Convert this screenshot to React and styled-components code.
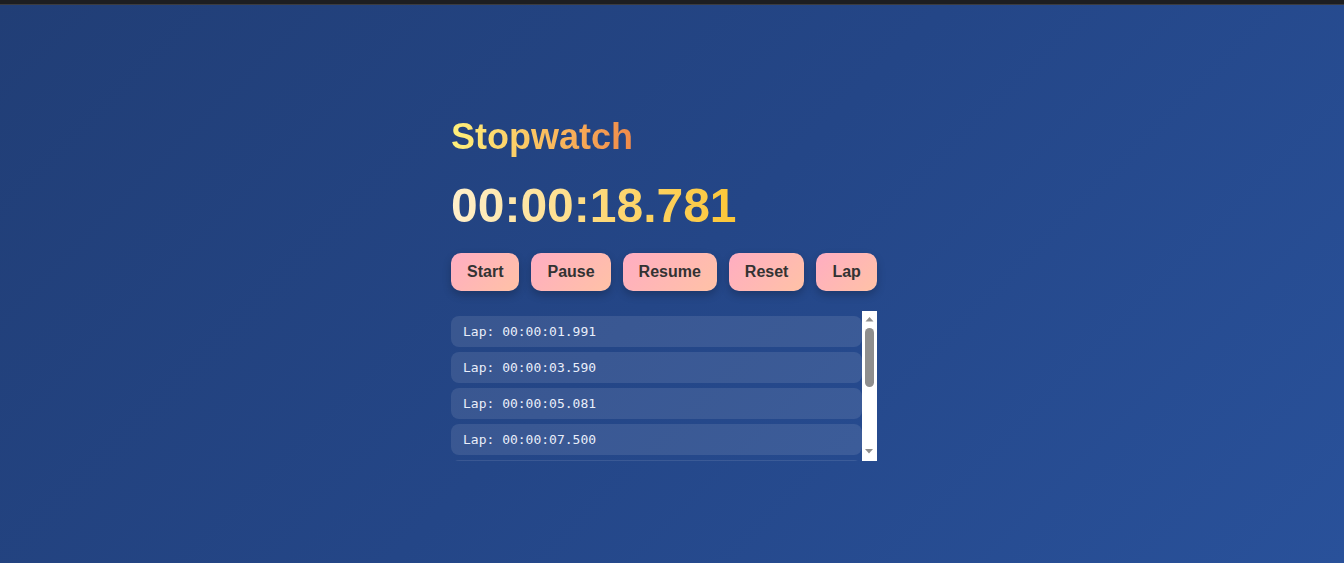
//STOPWATCH

//IMPORTING
import React from "react";
import styled, { createGlobalStyle } from "styled-components";

const laps = [
  "00:00:01.991",
  "00:00:03.590",
  "00:00:05.081",
  "00:00:07.500",
  "00:00:09.412",
  "00:00:11.877",
  "00:00:14.203",
  "00:00:16.650",
];

const buttons = ["Start", "Pause", "Resume", "Reset", "Lap"];

//ARROW
const Arrow = ({ down }) => (
  <ArrowButton>
    <svg width="15" height="15" viewBox="0 0 15 15">
      {down ? (
        <polygon points="3,3 11,3 7,7.5" fill="#8f8f8f" />
      ) : (
        <polygon points="7.5,6 11.5,10.5 3.5,10.5" fill="#8f8f8f" />
      )}
    </svg>
  </ArrowButton>
);

//APP
const App = () => {
  return (
    <>
      <GlobalStyle />
      <Page>
        <TopBar />
        <Panel>
          <Column>
            <Title>Stopwatch</Title>
            <Timer>00:00:18.781</Timer>
            <Controls>
              {buttons.map((label) => (
                <Button key={label}>{label}</Button>
              ))}
            </Controls>
            <LapList>
              <LapView>
                {laps.map((lap) => (
                  <LapItem key={lap}>Lap: {lap}</LapItem>
                ))}
              </LapView>
              <ScrollBar>
                <Arrow />
                <Track>
                  <Thumb />
                </Track>
                <Arrow down />
              </ScrollBar>
            </LapList>
          </Column>
        </Panel>
      </Page>
    </>
  );
};

//GLOBAL
const GlobalStyle = createGlobalStyle`
  html, body {
    margin: 0;
    padding: 0;
    height: 100%;
    overflow: hidden;
  }
  body {
    font-family: "Liberation Sans", Arial, sans-serif;
  }
`;

//PAGE
const Page = styled.div`
  min-height: 563px;
  height: 100vh;
  display: flex;
  flex-direction: column;
  background: linear-gradient(135deg, #213e76 0%, #244687 50%, #29519a 100%);
`;

//TOP BAR
const TopBar = styled.div`
  height: 4px;
  flex-shrink: 0;
  background: #1d1e21;
  border-bottom: 1px solid #3b3c40;
`;

//PANEL
const Panel = styled.div`
  width: 442px;
  margin: 0 auto;
  padding-top: 111px;
`;

//COLUMN
const Column = styled.div`
  display: inline-flex;
  flex-direction: column;
  align-items: stretch;
`;

//TITLE
const Title = styled.h1`
  margin: 0;
  font-size: 36px;
  font-weight: 700;
  align-self: flex-start;
  background: linear-gradient(90deg, #fff27c 0%, #fbc060 50%, #f08a4a 100%);
  -webkit-background-clip: text;
  background-clip: text;
  color: transparent;
`;

//TIMER
const Timer = styled.div`
  margin-top: 20px;
  font-size: 48px;
  font-weight: 700;
  align-self: flex-start;
  background: linear-gradient(90deg, #fff0cc 0%, #fdd877 55%, #fcc636 100%);
  -webkit-background-clip: text;
  background-clip: text;
  color: transparent;
`;

//CONTROLS
const Controls = styled.div`
  display: flex;
  gap: 12px;
  margin-top: 20px;
`;

//BUTTON
const Button = styled.button`
  border: none;
  border-radius: 10px;
  padding: 10px 16px;
  font-family: "Liberation Sans", Arial, sans-serif;
  font-size: 16px;
  font-weight: 700;
  line-height: 18px;
  color: #333;
  background: linear-gradient(135deg, #ffadc2 0%, #ffc2a6 100%);
  box-shadow: 0 4px 8px rgba(0, 0, 0, 0.22);
  cursor: pointer;
`;

//LAP LIST
const LapList = styled.div`
  margin-top: 20px;
  height: 150px;
  display: flex;
`;

//LAP VIEW
const LapView = styled.div`
  flex: 1;
  min-width: 0;
  overflow: hidden;
`;

//LAP ITEM
const LapItem = styled.div`
  margin: 5px 0;
  padding: 8px 12px;
  border-radius: 8px;
  background: rgba(255, 255, 255, 0.1);
  color: #e9eefa;
  font-family: "DejaVu Sans Mono", monospace;
  font-size: 13px;
  line-height: 15px;
`;

//SCROLL BAR
const ScrollBar = styled.div`
  width: 15px;
  flex-shrink: 0;
  display: flex;
  flex-direction: column;
  background: #fff;
`;

//ARROW BUTTON
const ArrowButton = styled.div`
  height: 15px;
  flex-shrink: 0;
  svg {
    display: block;
  }
`;

//TRACK
const Track = styled.div`
  flex: 1;
  padding: 2px 3px;
`;

//THUMB
const Thumb = styled.div`
  height: 59px;
  border-radius: 5px;
  background: #8e8e8e;
`;

export default App;
